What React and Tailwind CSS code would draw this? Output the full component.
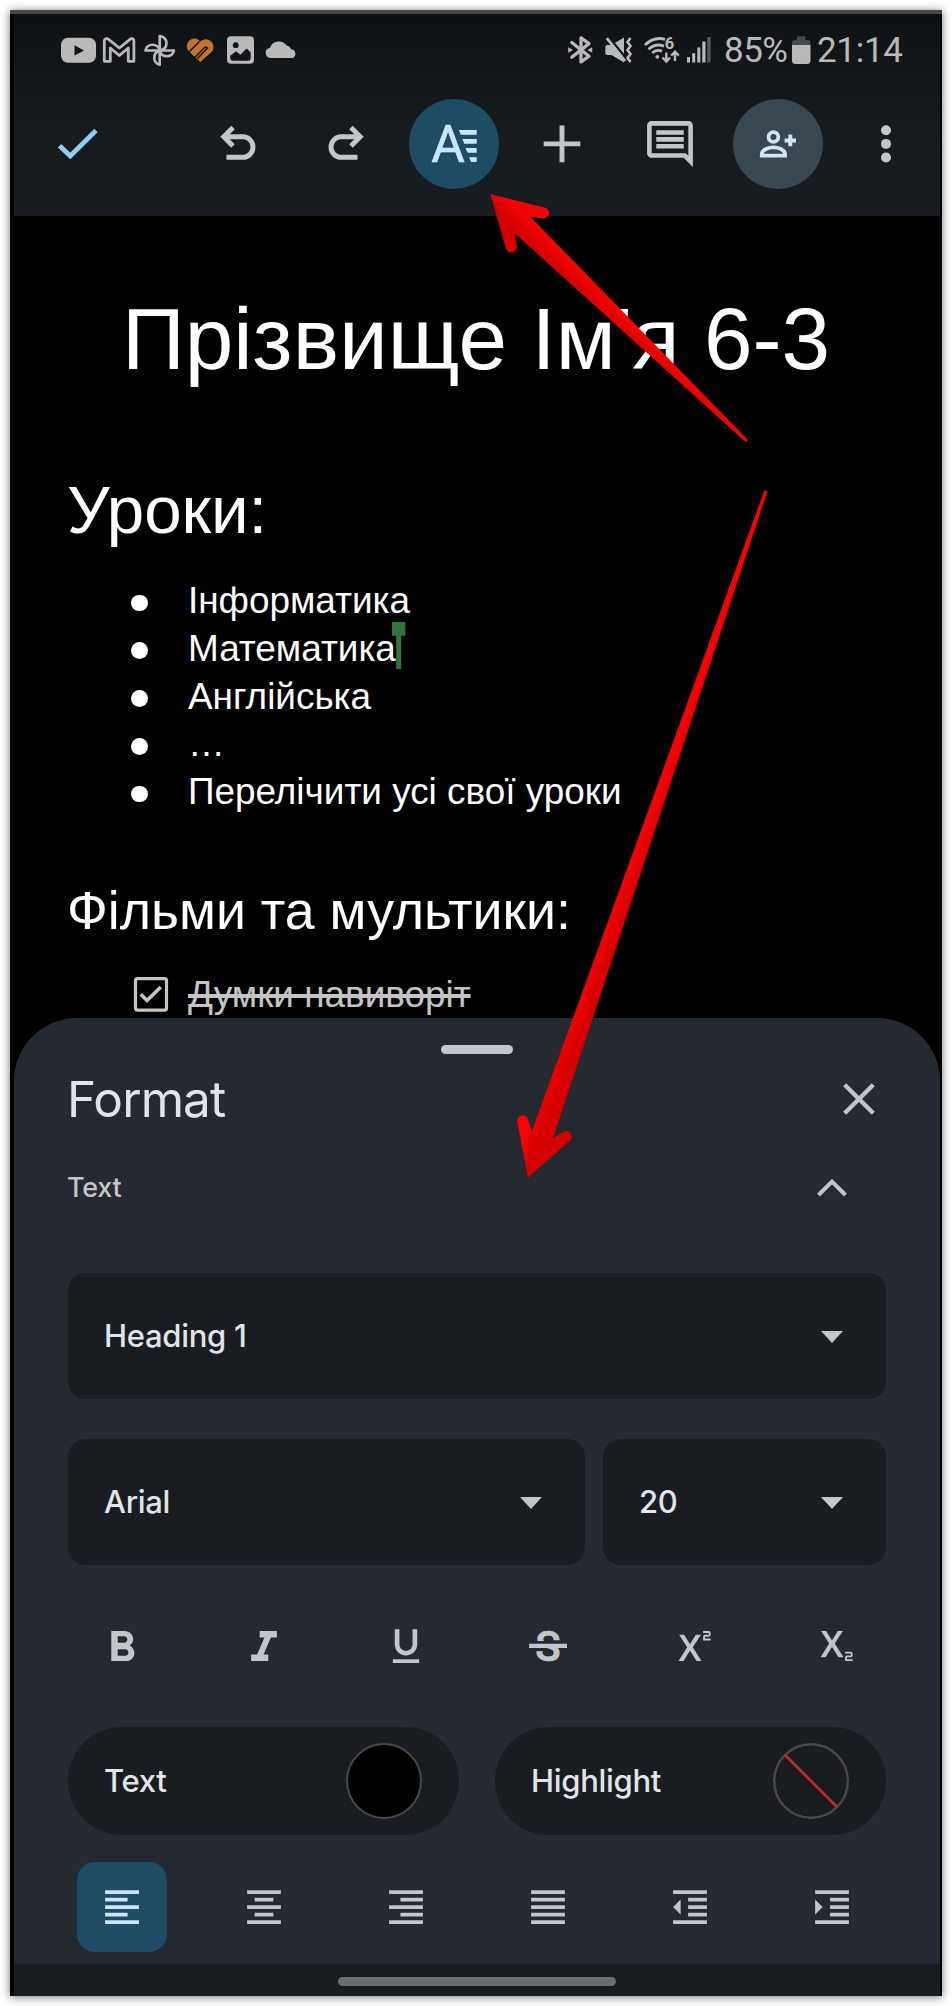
import React from "react";
import {
  MdFormatBold,
  MdFormatItalic,
  MdFormatUnderlined,
  MdSuperscript,
  MdSubscript,
  MdFormatAlignLeft,
  MdFormatAlignCenter,
  MdFormatAlignRight,
  MdFormatAlignJustify,
  MdFormatIndentDecrease,
  MdFormatIndentIncrease,
  MdOutlineComment,
} from "react-icons/md";

const GREY = "#b9b9ba";
const ICON = "#c2c6ca";

const REGULAR = { size: 46, viewBox: "-0.267 -0.267 24.533 24.533" };
const LARGE = { size: 46, viewBox: "1.267 0.267 21.467 21.467" };

function Glyph({ x, y = 34, w, h = 32, className = "", children }) {
  return (
    <svg width={w} height={h} viewBox={`${x} ${y} ${w} ${h}`} className={`block shrink-0 overflow-visible ${className}`} fill="none">
      {children}
    </svg>
  );
}

function StatusBar() {
  return (
    <div className="flex h-[72px] items-center pl-[47px]">
      <Glyph x={61} w={35}>
        <rect x="61" y="37.7" width="35" height="25" rx="7" fill={GREY} />
        <path d="M74.5 45.3 84 50.4l-9.500 5z" fill="#101314" />
      </Glyph>
      <Glyph x={103} w={32} className="ml-[7px]">
        <path d="M104.300 61.300V41.500Q104.300 38.300 107 38.600L108.500 39.300 119.300 48 130 39.300 131.500 38.600Q133.900 38.300 133.900 41.500V61.300H128.300V48L119.300 55.500 110.300 48V61.300Z" stroke={GREY} strokeWidth="2.800" strokeLinejoin="round" />
      </Glyph>
      <Glyph x={144} w={31} className="ml-[9px]">
        <g stroke={GREY} strokeWidth="2.700" strokeLinejoin="round">
          <path d="M159.700 50.500V36A6.800 7.200 0 0 1 159.700 50.400" />
          <path d="M159.700 50.500H145.500A7.100 6.500 0 0 1 159.600 50.500" />
          <path d="M159.700 50.500H173.900A7.100 6.500 0 0 1 159.800 50.500" />
          <path d="M159.700 50.500V64.700A6.800 7.200 0 0 1 159.700 50.600" />
        </g>
      </Glyph>
      <Glyph x={186} w={29} className="ml-[11px]">
        <path d="M200.300 62 188.300 50.800A7.200 7.200 0 0 1 200.300 41.500 7.800 7.800 0 0 1 212.500 51Z" fill="#c27331" />
        <path d="M187.800 53.300 199.500 41.500M193.800 58.500 204 48Q206.500 45.800 207.300 48L197.500 58.500" stroke="#121517" strokeWidth="1.500" />
      </Glyph>
      <Glyph x={227} w={27} className="ml-[12px]">
        <rect x="227" y="36.300" width="27" height="27.500" rx="4" fill={GREY} />
        <circle cx="235.700" cy="45.200" r="2.900" fill="#121517" />
        <path d="M230.300 58V55.800L236 51.300 240.300 54.800 246.800 48.600 250.700 52.500V58Q250.700 60.800 248 60.800H233Q230.300 60.800 230.300 58Z" fill="#121517" />
      </Glyph>
      <Glyph x={265} w={32} className="ml-[11px]">
        <path d="M270.500 58A5.200 5.200 0 0 1 270 47.700 9.300 9.300 0 0 1 286.500 45.500 5.500 5.500 0 0 1 291 49.300 4.500 4.500 0 0 1 292.500 58Z" fill={GREY} />
      </Glyph>
      <Glyph x={568} w={25} className="ml-[271px]">
        <path d="M571.800 42.500 589 56.200 581 62V37.800L589 43.600 571.800 57.300" stroke={GREY} strokeWidth="3.300" strokeLinejoin="round" strokeLinecap="round" />
        <path d="M568.200 47.300 573 50l-4.800 2.700zM592.200 47.300 587.500 50l4.700 2.700z" fill={GREY} />
      </Glyph>
      <Glyph x={605} w={27} className="ml-[12px]">
        <path d="M605.300 47Q605.300 45 607.300 45H611.500L624 37.500V62.500L611.500 55H607.300Q605.300 55 605.300 53z" fill={GREY} />
        <path d="M608.200 36.800 627.500 60" stroke="#121517" strokeWidth="2.600" />
        <path d="M606.800 38.200 625 61" stroke={GREY} strokeWidth="2.800" />
        <path d="M630.500 38 627.500 42 630.500 46 627.500 50 630.500 54 627.500 58 630.500 62" stroke={GREY} strokeWidth="2.700" strokeLinejoin="round" />
      </Glyph>
      <Glyph x={644} w={35} className="ml-[12px]">
        <path d="M645 45Q654 36.300 665 39.300M648.500 49.300Q655.500 42.800 664 46.200M652.300 53Q657 48.800 662 51.300" stroke={GREY} strokeWidth="2.900" />
        <circle cx="657.300" cy="56.800" r="1.900" fill={GREY} />
        <text x="664.800" y="48.800" fontFamily="Roboto, sans-serif" fontWeight="700" fontSize="16.500" fill={GREY}>6</text>
        <path d="M666.300 52.500v8.500M662.500 57.500l3.800 4 3.800-4M675 61v-8.500M671.200 55.700l3.800-4 3.800 4" stroke={GREY} strokeWidth="2.400" />
      </Glyph>
      <Glyph x={687} w={24} className="ml-[8px]">
        <path d="M687 57h3v5.500h-3zM692.200 53.300h3v9.200h-3zM697.300 47.500h3v15h-3zM702.300 41.500h3.200v21h-3.200z" fill={GREY} />
        <path d="M707.300 37h3.300v25.500h-3.300z" fill="#58595b" />
      </Glyph>
      <span className="ml-[13px] mt-[1px] w-[66px] whitespace-nowrap font-['Roboto',sans-serif] text-[35px] leading-[40px] tracking-[-0.5px] text-[#b9b9ba]">85%</span>
      <Glyph x={792} w={19} className="ml-[2px]">
        <path d="M792 46V43Q792 40 795 40H797V37.500Q797 36.200 798.300 36.200H804Q805.300 36.200 805.300 37.500V40H807.500Q810.500 40 810.500 43V46Z" fill="#47494b" />
        <path d="M792 45h18.500V60.500Q810.500 64 807 64H795.500Q792 64 792 60.500Z" fill={GREY} />
      </Glyph>
      <span className="ml-[6px] mt-[1px] whitespace-nowrap font-['Roboto',sans-serif] text-[35px] leading-[40px] tracking-[-0.3px] text-[#b9b9ba]">21:14</span>
    </div>
  );
}

function Cell({ children }) {
  return <div className="flex h-[90px] w-[108px] shrink-0 items-center justify-center">{children}</div>;
}

function Toolbar() {
  return (
    <div className="mt-[13px] flex items-center pl-[10px]">
      <Cell>
        <Glyph x={55} y={121} w={46} h={46}>
          <path d="M59.500 145.700 70.300 156 96 130.500" stroke="#8fcef5" strokeWidth="4.800" />
        </Glyph>
      </Cell>
      <div className="w-[52px]" />
      <Cell>
        <Glyph x={215} y={121} w={46} h={46}>
          <path d="M226.500 157.300H243.700A10.300 10.300 0 0 0 243.700 136.800H223.500M233 127.500 223.800 136.800 233 146" stroke={ICON} strokeWidth="5" />
        </Glyph>
      </Cell>
      <Cell>
        <Glyph x={323} y={121} w={46} h={46}>
          <path d="M357.500 157.300H340.300A10.300 10.300 0 0 1 340.300 136.800H360.500M351 127.500 360.200 136.800 351 146" stroke={ICON} strokeWidth="5" />
        </Glyph>
      </Cell>
      <Cell>
        <div className="flex size-[90px] items-center justify-center rounded-full bg-[#1e4b65]">
          <Glyph x={431} y={121} w={46} h={46}>
            <text x="431.300" y="162.200" fontFamily="Roboto, sans-serif" fontWeight="400" fontSize="51.500" textLength="34" fill="#c8e7fd" stroke="#c8e7fd" strokeWidth="0.600">A</text>
            <path d="M458.800 130H476.700V134.800H460.800zM462.300 139H476.700V143.700H464.300zM465.500 148H476.700V152.700H467.500zM469 157.200H476.700V162H471z" fill="#c8e7fd" />
          </Glyph>
        </div>
      </Cell>
      <Cell>
        <Glyph x={539} y={121} w={46} h={46}>
          <path d="M543.700 143.900H580.300M562 125.500V162.300" stroke={ICON} strokeWidth="4.900" />
        </Glyph>
      </Cell>
      <Cell>
        <MdOutlineComment size={56} viewBox="-0.217 -0.217 24.435 24.435" color={ICON} />
      </Cell>
      <Cell>
        <div className="flex size-[90px] items-center justify-center rounded-full bg-[#3a4650]">
          <Glyph x={755} y={121} w={46} h={46}>
            <circle cx="773.400" cy="137" r="4.900" stroke="#d3e5f5" strokeWidth="3.800" />
            <path d="M761.800 155.700V154.200C761.800 149.500 769 147.300 773.400 147.300S785 149.500 785 154.200V155.700Z" stroke="#d3e5f5" strokeWidth="3.800" />
            <path d="M784.600 140.500H796M790.300 134.500V146.200" stroke="#d3e5f5" strokeWidth="3.900" />
          </Glyph>
        </div>
      </Cell>
      <Cell>
        <Glyph x={863} y={121} w={46} h={46}>
          <circle cx="886" cy="130.300" r="5" fill={ICON} />
          <circle cx="886" cy="143.900" r="5" fill={ICON} />
          <circle cx="886" cy="157.500" r="5" fill={ICON} />
        </Glyph>
      </Cell>
    </div>
  );
}

const LESSONS = ["Інформатика", "Математика", "Англійська", "…", "Перелічити усі свої уроки"];

function Document() {
  return (
    <main className="h-[802px] overflow-hidden bg-black pl-[53px] pr-[55px] pt-[73px] font-['Liberation_Sans',Arial,sans-serif] text-white">
      <h1 className="whitespace-nowrap text-center text-[87.3px] leading-[100px]">Прізвище Ім'я 6-3</h1>
      <h2 className="mt-[83px] text-[67.3px] leading-[76px]">Уроки:</h2>
      <ul className="mt-[29px]">
        {LESSONS.map((lesson) => (
          <li key={lesson} className="flex h-[47.8px] items-center pl-[64px]">
            <span className="mt-1 size-[16.500px] rounded-full bg-white" />
            <span className="relative ml-[40.500px] whitespace-nowrap text-[36.900px] leading-[47.800px]">
              {lesson}
              {lesson === "Математика" && (
                <svg width="14" height="47" viewBox="0 0 14 47" className="absolute left-[203.500px] top-[-3px]">
                  <path d="M0 0H13.300V13.700H9.200V47H4.200V13.700H0Z" fill="#34743c" />
                </svg>
              )}
            </span>
          </li>
        ))}
      </ul>
      <h3 className="mt-[63.700px] text-[53.700px] leading-[60px]">Фільми та мультики:</h3>
      <div className="mt-[31px] flex h-[47.800px] items-center pl-[67px] text-[#c4c4c4]">
        <Glyph x={134} y={977} w={34} h={35}>
          <rect x="135.500" y="978.600" width="31" height="31.500" rx="2" stroke="#c4c4c4" strokeWidth="3.200" />
          <path d="M140.800 994.300 147 1000.500 160.800 987" stroke="#c4c4c4" strokeWidth="3.700" />
        </Glyph>
        <span className="ml-[20px] whitespace-nowrap text-[36.900px] leading-[47.800px] line-through decoration-[4px]">Думки навиворіт</span>
      </div>
    </main>
  );
}

function Select({ label, className }) {
  return (
    <div className={`flex h-[126px] items-center justify-between rounded-[18px] bg-[#191c20] pl-[36px] pr-[43px] ${className}`}>
      <span className="whitespace-nowrap text-[31px] font-medium tracking-[-0.3px] text-[#e1e4e8]">{label}</span>
      <svg width="22" height="12" viewBox="0 0 22 12" className="mt-[2px]">
        <path d="M0 0H22L11 12Z" fill={ICON} />
      </svg>
    </div>
  );
}

function Tool({ active, children }) {
  return (
    <div className="flex w-[142px] justify-center">
      <div className={`flex size-[90px] items-center justify-center rounded-[18px] ${active ? "bg-[#1e4b65] text-[#c8e7fd]" : "text-[#c2c6ca]"}`}>
        {children}
      </div>
    </div>
  );
}

function ColorPill({ label, children }) {
  return (
    <div className="flex h-[108px] w-[391px] items-center justify-between rounded-full bg-[#191c20] pl-[36px] pr-[37px]">
      <span className="whitespace-nowrap text-[31px] font-medium tracking-[-0.3px] text-[#e1e4e8]">{label}</span>
      {children}
    </div>
  );
}

function FormatSheet() {
  return (
    <section className="flex h-[946px] flex-col rounded-t-[63px] bg-[#252a30] pl-[37px] pt-[27px] font-['Inter',sans-serif]">
      <div className="ml-[390px] h-[9px] w-[72px] rounded-full bg-[#c2c7cb]" />
      <div className="mt-[14px] flex h-[62px] items-center pl-[16px]">
        <h2 className="w-[776px] text-[49.500px] leading-[60px] tracking-[-0.900px] text-[#e1e4e8]">Format</h2>
        <svg width="32" height="32" viewBox="0 0 32 32">
          <path d="M1.700 1.700 30.300 30.300M30.300 1.700 1.700 30.300" stroke={ICON} strokeWidth="4.300" />
        </svg>
      </div>
      <div className="mt-[41px] flex h-[34px] items-center pl-[16px]">
        <span className="w-[750px] text-[27px] font-[450] leading-[34px] tracking-[-0.300px] text-[#c2c6ca]">Text</span>
        <svg width="30" height="18" viewBox="0 0 30 18">
          <path d="M1.500 16 15 2.700 28.500 16" stroke={ICON} strokeWidth="4" fill="none" />
        </svg>
      </div>
      <div className="ml-[17px] mt-[68px] w-[818px]">
        <Select label="Heading 1" className="w-[818px]" />
        <div className="mt-[40px] flex gap-[18px]">
          <Select label="Arial" className="w-[517px]" />
          <Select label="20" className="w-[283px]" />
        </div>
      </div>
      <div className="mt-[36px] flex">
        <Tool>
          <MdFormatBold {...LARGE} />
        </Tool>
        <Tool>
          <MdFormatItalic {...LARGE} />
        </Tool>
        <Tool>
          <MdFormatUnderlined {...REGULAR} />
        </Tool>
        <Tool>
          <svg width="60" height="60" viewBox="-7 -7 60 60" className="overflow-visible">
            <text x="23" y="38" textAnchor="middle" fontFamily="Roboto, sans-serif" fontWeight="500" fontSize="42" fill={ICON} stroke={ICON} strokeWidth="0.700">S</text>
            <path d="M2.500 18H43.500V21H2.500z" fill="#252a30" />
            <path d="M4.100 20.700H42V25H4.100z" fill={ICON} />
            <path d="M2.500 25H22V27.500H2.500z" fill="#252a30" />
          </svg>
        </Tool>
        <Tool>
          <MdSuperscript {...REGULAR} />
        </Tool>
        <Tool>
          <MdSubscript {...REGULAR} />
        </Tool>
      </div>
      <div className="ml-[17px] mt-[36px] flex gap-[36px]">
        <ColorPill label="Text">
          <div className="size-[76px] rounded-full border-[2.500px] border-[#46484b] bg-black" />
        </ColorPill>
        <ColorPill label="Highlight">
          <svg width="76" height="76" viewBox="0 0 76 76">
            <circle cx="38" cy="38" r="36.800" fill="none" stroke="#46484b" strokeWidth="2.400" />
            <path d="M12 12 64 64" stroke="#c5281f" strokeWidth="2.700" />
          </svg>
        </ColorPill>
      </div>
      <div className="mt-[27px] flex">
        <Tool active>
          <MdFormatAlignLeft {...REGULAR} />
        </Tool>
        <Tool>
          <MdFormatAlignCenter {...REGULAR} />
        </Tool>
        <Tool>
          <MdFormatAlignRight {...REGULAR} />
        </Tool>
        <Tool>
          <MdFormatAlignJustify {...REGULAR} />
        </Tool>
        <Tool>
          <MdFormatIndentDecrease {...REGULAR} />
        </Tool>
        <Tool>
          <MdFormatIndentIncrease {...REGULAR} />
        </Tool>
      </div>
    </section>
  );
}

function Arrows() {
  return (
    <svg width="952" height="2006" viewBox="0 0 952 2006" className="pointer-events-none absolute left-0 top-0">
      <defs>
        <linearGradient id="arrowUp" gradientUnits="userSpaceOnUse" x1="594" y1="305" x2="604" y2="295">
          <stop offset="0" stopColor="#d70000" />
          <stop offset="1" stopColor="#f20404" />
        </linearGradient>
        <linearGradient id="arrowDown" gradientUnits="userSpaceOnUse" x1="634" y1="852" x2="647" y2="857">
          <stop offset="0" stopColor="#f20404" />
          <stop offset="1" stopColor="#d70000" />
        </linearGradient>
      </defs>
      <path d="M490.500 194 544.500 207.500A5.500 5.500 0 0 1 542.500 218.500L530.300 216.700 747 439A1.500 1.500 0 0 1 744.800 441.200L514.700 233.300 516.800 245.500A5.500 5.500 0 0 1 505.800 248Z" fill="url(#arrowUp)" />
      <path d="M528 1177.500 517.300 1122A5.400 5.400 0 0 1 528 1119.500L532 1131 764 491.500A1.500 1.500 0 0 1 767 492.500L553 1138.300 563.500 1132A5.400 5.400 0 0 1 570 1140.500Z" fill="url(#arrowDown)" />
    </svg>
  );
}

export default function App() {
  return (
    <div className="relative h-[2006px] w-[952px] overflow-hidden bg-white p-[10px]">
      <div className="h-[1986px] w-[932px] border-l-4 border-r-2 border-black bg-black shadow-[0_1px_9px_rgba(0,0,0,0.55)]">
        <div className="-ml-1 -mr-0.5 h-[4px] bg-[#454949]" />
        <header className="h-[202px] bg-gradient-to-b from-[#0f1214] via-[#171a1d] to-[#191c20]">
          <StatusBar />
          <Toolbar />
        </header>
        <Document />
        <FormatSheet />
        <div className="flex h-[32px] justify-center bg-[#191c20] pt-[13px]">
          <div className="h-[9px] w-[278px] rounded-full bg-[#6a6e71]" />
        </div>
      </div>
      <Arrows />
    </div>
  );
}
